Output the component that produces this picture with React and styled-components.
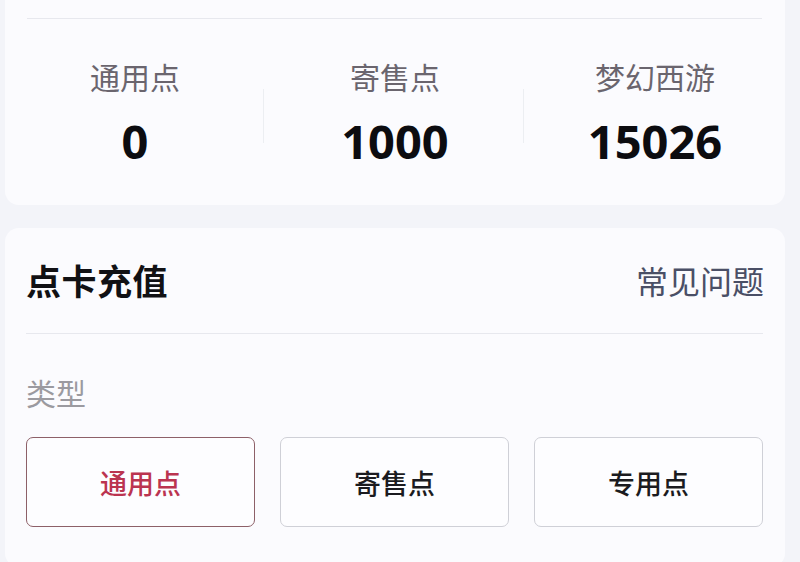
import React from "react";
import styled, { createGlobalStyle } from "styled-components";

const Global = createGlobalStyle`
  html, body { margin: 0; padding: 0; background: #f3f4f9; }
  body { font-family: "Noto Sans CJK SC", "Noto Sans", sans-serif; }
  * { box-sizing: border-box; }
`;

const Page = styled.div`
  width: 800px;
  height: 562px;
  overflow: hidden;
  padding: 0 15px 0 5px;
  display: flex;
  flex-direction: column;
  gap: 23px;
`;

const Card = styled.section`
  background: #fbfbfe;
  border-radius: ${(p) => (p.$top ? "0 0 14px 14px" : "14px")};
  padding: ${(p) => p.$pad};
`;

const Divider = styled.div`
  height: 1px;
  background: #e7e8ee;
  margin: ${(p) => p.$m || "0"};
`;

const Stats = styled.div`
  display: grid;
  grid-template-columns: 1fr 1fr 1fr;
  align-items: center;
  padding: 40px 0 36px;
`;

const Stat = styled.div`
  display: flex;
  flex-direction: column;
  align-items: center;
  justify-content: center;
  height: 110px;
  position: relative;

  &::before {
    content: "";
    display: ${(p) => (p.$first ? "none" : "block")};
    position: absolute;
    left: -2px;
    top: 30px;
    height: 54px;
    width: 1px;
    background: #eceef2;
  }
`;

const StatLabel = styled.div`
  font-size: 30px;
  line-height: 42px;
  color: #6a656e;
  font-weight: 400;
`;

const StatValue = styled.div`
  font-family: "Noto Sans", "Roboto", sans-serif;
  font-size: 47px;
  line-height: 64px;
  font-weight: 700;
  color: #0c0c10;
  margin-top: 12px;
`;

const Header = styled.div`
  display: flex;
  justify-content: space-between;
  align-items: center;
  height: 105px;
  padding-bottom: 2px;
`;

const Title = styled.h2`
  margin: 0;
  font-size: 35px;
  font-weight: 700;
  color: #111114;
  letter-spacing: 0.5px;
`;

const Link = styled.a`
  font-size: 32px;
  color: #4a4f66;
  text-decoration: none;
  margin-right: -1px;
`;

const Label = styled.div`
  font-size: 30px;
  line-height: 40px;
  color: #9b9aa0;
  margin: 38px 0 25px;
`;

const Options = styled.div`
  display: grid;
  grid-template-columns: repeat(3, 1fr);
  gap: 25px;
`;

const Option = styled.button`
  height: 90px;
  border-radius: 7px;
  background: #fdfdff;
  border: 1px solid ${(p) => (p.$active ? "#8d6068" : "#cfd0d7")};
  color: ${(p) => (p.$active ? "#bb3450" : "#1b1b20")};
  font-family: "Noto Sans CJK SC", sans-serif;
  font-size: 27px;
  font-weight: 500;
  padding: 0;
  cursor: pointer;
`;

const stats = [
  { label: "通用点", value: "0" },
  { label: "寄售点", value: "1000" },
  { label: "梦幻西游", value: "15026" },
];

export default function App() {
  return (
    <>
      <Global />
      <Page>
        <Card $top $pad="18px 0 0">
          <Divider $m="0 23px 0 22px" />
          <Stats>
            {stats.map((s, i) => (
              <Stat key={s.label} $first={i === 0}>
                <StatLabel>{s.label}</StatLabel>
                <StatValue>{s.value}</StatValue>
              </Stat>
            ))}
          </Stats>
        </Card>
        <Card $pad="0 22px 40px 21px">
          <Header>
            <Title>点卡充值</Title>
            <Link href="#">常见问题</Link>
          </Header>
          <Divider />
          <Label>类型</Label>
          <Options>
            <Option $active>通用点</Option>
            <Option>寄售点</Option>
            <Option>专用点</Option>
          </Options>
        </Card>
      </Page>
    </>
  );
}
